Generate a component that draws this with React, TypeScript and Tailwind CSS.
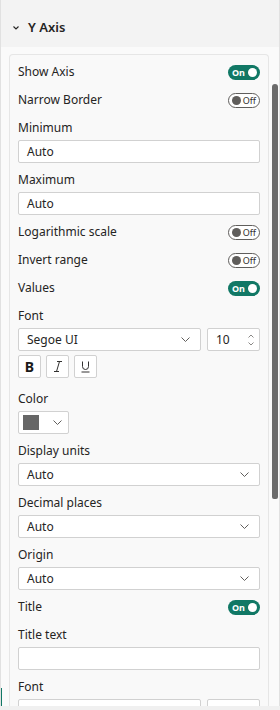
import React from "react";

function Chevron({ className = "" }: { className?: string }) {
  return (
    <svg width="9" height="5" viewBox="0 0 9 5" className={className} fill="none">
      <path d="M0.5 0.5 L4.5 4.5 L8.5 0.5" stroke="#605e5c" strokeWidth="1" />
    </svg>
  );
}

function Toggle({ on }: { on: boolean }) {
  if (on) {
    return (
      <div className="flex h-[15px] w-[32px] items-center justify-between rounded-full bg-[#117865] pl-[4px] pr-[3px]">
        <span className="text-[9px] font-bold leading-none text-white">On</span>
        <span className="h-[9px] w-[9px] rounded-full bg-white" />
      </div>
    );
  }
  return (
    <div className="flex h-[15px] w-[32px] items-center justify-between rounded-full border border-[#605e5c] bg-white pl-[3px] pr-[3px]">
      <span className="h-[9px] w-[9px] rounded-full bg-[#605e5c]" />
      <span className="text-[9px] leading-none text-[#323130]">Off</span>
    </div>
  );
}

function ToggleRow({ label, on }: { label: string; on: boolean }) {
  return (
    <div className="flex h-[28px] items-center justify-between">
      <span>{label}</span>
      <Toggle on={on} />
    </div>
  );
}

function Label({ children }: { children: React.ReactNode }) {
  return <div className="flex h-[26px] items-center pt-[2px]">{children}</div>;
}

function TextBox({ value = "" }: { value?: string }) {
  return (
    <div className="flex h-[23px] items-center rounded-[2px] border border-[#d1d1d1] bg-white px-[8px]">
      {value}
    </div>
  );
}

function Select({ value, className = "" }: { value: string; className?: string }) {
  return (
    <div
      className={`flex h-[23px] items-center justify-between rounded-[2px] border border-[#d1d1d1] bg-white pl-[8px] pr-[10px] ${className}`}
    >
      <span>{value}</span>
      <Chevron />
    </div>
  );
}

function Field({ label, children }: { label: string; children: React.ReactNode }) {
  return (
    <div className="mb-[3px]">
      <Label>{label}</Label>
      {children}
    </div>
  );
}

function FontRow({ empty }: { empty?: boolean }) {
  return (
    <div className="flex gap-[6px]">
      <Select value={empty ? "" : "Segoe UI"} className="w-[183px] pr-[8px]" />
      <div className="flex h-[23px] flex-1 items-center justify-between rounded-[2px] border border-[#d1d1d1] bg-white pl-[8px] pr-[5px]">
        <span>{empty ? "" : "10"}</span>
        <div className="flex flex-col gap-[4px]">
          <svg width="6" height="4" viewBox="0 0 6 4" fill="none">
            <path d="M0.5 3.5 L3 1 L5.5 3.5" stroke="#8a8886" strokeWidth="1" />
          </svg>
          <svg width="6" height="4" viewBox="0 0 6 4" fill="none">
            <path d="M0.5 0.5 L3 3 L5.5 0.5" stroke="#8a8886" strokeWidth="1" />
          </svg>
        </div>
      </div>
    </div>
  );
}

function StyleButton({ children }: { children: React.ReactNode }) {
  return (
    <div className="flex h-[23px] w-[23px] items-center justify-center rounded-[2px] border border-[#d1d1d1] bg-white">
      {children}
    </div>
  );
}

export default function App() {
  return (
    <div className="flex h-[710px] w-[280px] flex-col overflow-hidden bg-[#f0f0f0] font-['Segoe_UI','Noto_Sans',sans-serif] text-[12px] text-[#252423]">
      <div className="relative flex flex-1 flex-col overflow-hidden border-l border-r border-[#e1e1e1] bg-[#fafafa]">
        {/* Header */}
        <div className="flex h-[47px] shrink-0 items-center gap-[9px] bg-[#f3f3f3] pl-[12px] pt-[8px]">
          <svg width="6" height="4" viewBox="0 0 6 4" fill="none">
            <path d="M0.5 0.5 L3 3 L5.5 0.5" stroke="#252423" strokeWidth="1.1" />
          </svg>
          <span className="text-[13px] font-semibold">Y Axis</span>
        </div>

        {/* Card */}
        <div className="ml-[8px] mt-[7px] w-[260px] flex-1 rounded-t-[4px] border border-b-0 border-[#e6e6e6] bg-[#f9f9f9] px-[8px] pt-[3px]">
          <ToggleRow label="Show Axis" on />
          <ToggleRow label="Narrow Border" on={false} />
          <Field label="Minimum">
            <TextBox value="Auto" />
          </Field>
          <Field label="Maximum">
            <TextBox value="Auto" />
          </Field>
          <ToggleRow label="Logarithmic scale" on={false} />
          <ToggleRow label="Invert range" on={false} />
          <ToggleRow label="Values" on />
          <Label>Font</Label>
          <FontRow />
          <div className="mb-[7px] mt-[4px] flex gap-[5px]">
            <StyleButton>
              <span className="text-[14px] font-bold leading-none text-[#1b1a19]">B</span>
            </StyleButton>
            <StyleButton>
              <svg width="10" height="11" viewBox="0 0 10 11" fill="none">
                <path d="M4 0.5 H9 M1 10.5 H6 M6.5 0.5 L3.5 10.5" stroke="#323130" strokeWidth="1" />
              </svg>
            </StyleButton>
            <StyleButton>
              <svg width="9" height="12" viewBox="0 0 9 12" fill="none">
                <path d="M1.5 0.5 V5.5 Q1.5 8.5 4.5 8.5 Q7.5 8.5 7.5 5.5 V0.5 M0.5 11 H8.5" stroke="#323130" strokeWidth="1" />
              </svg>
            </StyleButton>
          </div>
          <Field label="Color">
            <div className="flex h-[23px] w-[51px] items-center justify-between rounded-[2px] border border-[#d1d1d1] bg-white pl-[4px] pr-[6px]">
              <span className="h-[15px] w-[16px] bg-[#666666]" />
              <Chevron />
            </div>
          </Field>
          <Field label="Display units">
            <Select value="Auto" />
          </Field>
          <Field label="Decimal places">
            <Select value="Auto" />
          </Field>
          <Field label="Origin">
            <Select value="Auto" />
          </Field>
          <ToggleRow label="Title" on />
          <Field label="Title text">
            <TextBox />
          </Field>
          <Label>Font</Label>
          <FontRow empty />
        </div>

        {/* Scrollbar */}
        <div className="absolute right-[1px] top-[84px] h-[415px] w-[6px] rounded-t-[3px] rounded-b-[2px] bg-[#6b6b6b]" />
        {/* Focus indicator */}
        <div className="absolute bottom-0 left-[-1px] h-[18px] w-[2px] bg-[#117865]" />
      </div>
      <div className="h-[4px] shrink-0 bg-[#f0f0f0]" />
    </div>
  );
}
